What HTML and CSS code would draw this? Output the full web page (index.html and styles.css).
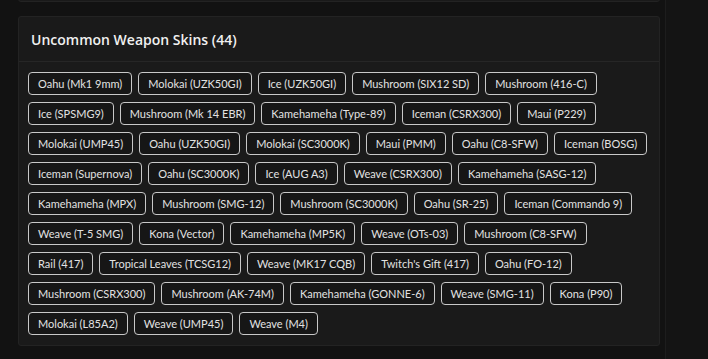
FILE: index.html
```html
<!DOCTYPE html>
<html lang="en">
<head>
    <meta charset="UTF-8">
    <meta name="viewport" content="width=device-width, initial-scale=1.0">
    <title>Uncommon Weapon Skins</title>
    <link rel="stylesheet" href="styles.css">
</head>
<body>

<div class="layout">
    <div class="main">
        <div class="card card-prev"></div>

        <div class="card">
            <div class="card-header">Uncommon Weapon Skins (44)</div>
            <div class="card-body">
                <span class="chip">Oahu (Mk1 9mm)</span>
                <span class="chip">Molokai (UZK50GI)</span>
                <span class="chip">Ice (UZK50GI)</span>
                <span class="chip">Mushroom (SIX12 SD)</span>
                <span class="chip">Mushroom (416-C)</span>
                <span class="chip">Ice (SPSMG9)</span>
                <span class="chip">Mushroom (Mk 14 EBR)</span>
                <span class="chip">Kamehameha (Type-89)</span>
                <span class="chip">Iceman (CSRX300)</span>
                <span class="chip">Maui (P229)</span>
                <span class="chip">Molokai (UMP45)</span>
                <span class="chip">Oahu (UZK50GI)</span>
                <span class="chip">Molokai (SC3000K)</span>
                <span class="chip">Maui (PMM)</span>
                <span class="chip">Oahu (C8-SFW)</span>
                <span class="chip">Iceman (BOSG)</span>
                <span class="chip">Iceman (Supernova)</span>
                <span class="chip">Oahu (SC3000K)</span>
                <span class="chip">Ice (AUG A3)</span>
                <span class="chip">Weave (CSRX300)</span>
                <span class="chip">Kamehameha (SASG-12)</span>
                <span class="chip">Kamehameha (MPX)</span>
                <span class="chip">Mushroom (SMG-12)</span>
                <span class="chip">Mushroom (SC3000K)</span>
                <span class="chip">Oahu (SR-25)</span>
                <span class="chip">Iceman (Commando 9)</span>
                <span class="chip">Weave (T-5 SMG)</span>
                <span class="chip">Kona (Vector)</span>
                <span class="chip">Kamehameha (MP5K)</span>
                <span class="chip">Weave (OTs-03)</span>
                <span class="chip">Mushroom (C8-SFW)</span>
                <span class="chip">Rail (417)</span>
                <span class="chip">Tropical Leaves (TCSG12)</span>
                <span class="chip">Weave (MK17 CQB)</span>
                <span class="chip">Twitch's Gift (417)</span>
                <span class="chip">Oahu (FO-12)</span>
                <span class="chip">Mushroom (CSRX300)</span>
                <span class="chip">Mushroom (AK-74M)</span>
                <span class="chip">Kamehameha (GONNE-6)</span>
                <span class="chip">Weave (SMG-11)</span>
                <span class="chip">Kona (P90)</span>
                <span class="chip">Molokai (L85A2)</span>
                <span class="chip">Weave (UMP45)</span>
                <span class="chip">Weave (M4)</span>
            </div>
        </div>
    </div>
    <div class="side"></div>
</div>

</body>
</html>
```

FILE: styles.css
```css
html, body {
    margin: 0;
    height: 100%;
    overflow: hidden;
    background-color: #121212;
    font-family: "Open Sans", "Liberation Sans", sans-serif;
    color: #e6e6e6;
}

.layout {
    display: flex;
    height: 100%;
}

.main {
    flex: none;
    width: 642px;
    padding: 0 0 0 18px;
    margin-top: -14px;
}

.side {
    flex: 1;
    margin-left: 5px;
    border-left: 1px solid #1d1d1d;
    background-color: #141414;
}

.card {
    background-color: #1a1a1a;
    border: 1px solid #232323;
    border-radius: 3px;
    margin-bottom: 14px;
}

.card-prev {
    height: 14px;
}

.card-header {
    padding: 13px 12px 12px;
    font-size: 14px;
    font-weight: 600;
    color: #f0f0f0;
    border-bottom: 1px solid #262626;
}

.card-body {
    display: flex;
    flex-wrap: wrap;
    gap: 7px 6px;
    padding: 10px 6px 10px 9px;
}

.chip {
    display: inline-block;
    padding: 4px 9px;
    font-family: Lato, "Open Sans", sans-serif;
    font-size: 11px;
    line-height: 13px;
    border: 1px solid #c8c8c8;
    border-radius: 4px;
    background-color: #161616;
    color: #e2e2e2;
}
```
